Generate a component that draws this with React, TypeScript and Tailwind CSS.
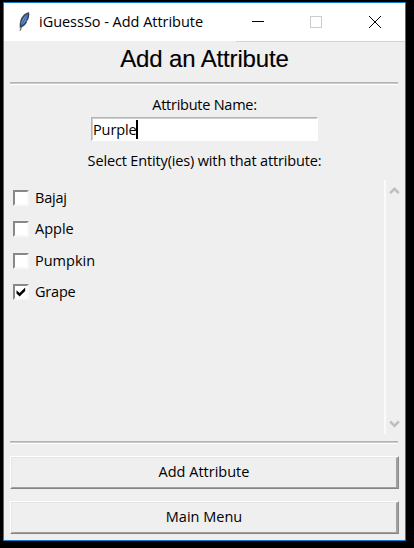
import { useState } from "react";

const UI_FONT = "font-['Open_Sans','Noto_Sans',sans-serif] text-[14.5px] leading-[20px] text-black whitespace-nowrap";

const ENTITIES = ["Bajaj", "Apple", "Pumpkin", "Grape"];
const TRACKING = ["tracking-[-0.2px]", "tracking-normal", "tracking-normal", "tracking-[-0.2px]"];

function Feather() {
  return (
    <svg width="14" height="22" viewBox="0 0 14 22" className="shrink-0">
      <path d="M12 1.2 C8 1.8 5 4.8 3.5 9 C2.6 12 2.4 15 3 17 C6.2 16 8.8 13.8 10 11.2 L9.5 10.5 L11 9 C12.3 6 12.6 3.5 12 1.2Z" fill="#3b4452" />
      <path d="M10.8 2.8 C7.8 4.2 5.2 7.5 4 12.2 L4.8 14.6 C7.6 12.8 10.2 9 10.8 2.8Z" fill="#5b94dc" />
      <path d="M10.5 3.3 C8 7.5 5 12 3.6 19" stroke="#2c5387" strokeWidth="0.8" fill="none" />
      <path d="M3.4 16 L3.2 20" stroke="#777" strokeWidth="1" />
    </svg>
  );
}

function TitleBar() {
  return (
    <header className="flex h-[38px] shrink-0 bg-white">
      <div className="flex w-[232px] items-center pl-[13px]">
        <Feather />
        <span className={`${UI_FONT} ml-[8px] tracking-[-0.03px]`}>iGuessSo - Add Attribute</span>
      </div>
      <svg width="169" height="38" viewBox="0 0 169 38" shapeRendering="crispEdges">
        <path d="M16 18.5H28" stroke="#000" />
        <rect x="74.5" y="13.5" width="11" height="11" fill="none" stroke="#cccccc" />
        <path d="M133 13L145 25M145 13L133 25" stroke="#000" />
      </svg>
    </header>
  );
}

function Groove() {
  return (
    <div className="mx-[6px] h-[3px] w-[388px] shrink-0 border-t border-b border-t-[#b4b4b4] border-b-white bg-[#c8c8c8]" />
  );
}

function Check({ on, onToggle }: { on: boolean; onToggle: () => void }) {
  return (
    <button
      onClick={onToggle}
      className="flex h-[16px] w-[16px] shrink-0 border-2 border-t-[#888888] border-r-[#f8f8f8] border-b-[#f8f8f8] border-l-[#888888] bg-white"
    >
      {on && (
        <svg width="12" height="12" viewBox="0 0 12 12">
          <path d="M1.5 4.2 L4.6 7 L10.2 1.4 V5 L4.6 10.4 L1.5 7.6Z" fill="#000" />
        </svg>
      )}
    </button>
  );
}

function Chevron({ down = false }: { down?: boolean }) {
  return (
    <svg width="11" height="9" viewBox="0 0 11 9">
      <path d={down ? "M1.2 1.5 L5.5 5.8 L9.8 1.5" : "M1.2 7.2 L5.5 2.9 L9.8 7.2"} fill="none" stroke="#bfbfbf" strokeWidth="2.6" />
    </svg>
  );
}

function PushButton({ label }: { label: string }) {
  return (
    <button className="flex h-[33px] w-[389px] shrink-0 border border-t-white border-r-[#8c8c8c] border-b-[#858585] border-l-white">
      <span className="flex h-[31px] w-[387px] items-center justify-center border border-r-2 border-t-[#e4e4e4] border-r-[#a0a0a0] border-b-[#a0a0a0] border-l-[#e4e4e4] pb-px">
        <span className={UI_FONT}>{label}</span>
      </span>
    </button>
  );
}

export default function App() {
  const [checked, setChecked] = useState([false, false, false, true]);
  const toggle = (i: number) => setChecked(checked.map((v, j) => (i === j ? !v : v)));

  return (
    <div className="h-[548px] w-[414px] overflow-hidden bg-black pt-[2px] pl-[3px]">
      <div className="flex h-[539px] w-[403px] flex-col border border-[#1979ca] bg-[#efefef]">
        <TitleBar />
        <div className="ml-[232px] h-px shrink-0 bg-[#d4d4d4]" />
        <h1 className="flex h-[40px] shrink-0 items-center justify-center pb-[6px] font-['Liberation_Sans',Arial,sans-serif] text-[24px] leading-[30px] tracking-[-0.14px] text-black [-webkit-text-stroke:0.15px_black]">
          Add an Attribute
        </h1>
        <Groove />
        <div className="flex h-[32px] shrink-0 items-end justify-center pb-[2px]">
          <span className={`${UI_FONT} tracking-[-0.25px]`}>Attribute Name:</span>
        </div>
        <div className="ml-[87px] flex h-[24px] w-[227px] shrink-0 border border-t-[#b4b4b4] border-r-white border-b-white border-l-[#b4b4b4] bg-white">
          <div className="flex w-[225px] items-center border-t border-l border-[#d0d0d0]">
            <span className={`${UI_FONT} tracking-[-0.1px]`}>Purple</span>
            <span className="-ml-px h-[19px] w-[2px] bg-black" />
          </div>
        </div>
        <div className="flex h-[39px] shrink-0 items-center justify-center">
          <span className={`${UI_FONT} tracking-[-0.15px]`}>Select Entity(ies) with that attribute:</span>
        </div>
        <div className="flex h-[254px] shrink-0">
          <div className="flex w-[380px] flex-col pt-[2.4px] pl-[9px]">
            {ENTITIES.map((name, i) => (
              <div key={name} className="flex h-[31.3px] items-center">
                <Check on={checked[i]} onToggle={() => toggle(i)} />
                <span className={`${UI_FONT} ml-[6px] ${TRACKING[i]}`}>{name}</span>
              </div>
            ))}
          </div>
          <div className="flex w-[21px] flex-col items-end justify-between border-l-2 border-[#fafafa] pt-[6px] pr-[5px] pb-[5px]">
            <Chevron />
            <Chevron down />
          </div>
        </div>
        <div className="h-[7px] shrink-0" />
        <Groove />
        <div className="flex flex-col gap-[12px] pt-[12px] pl-[6px]">
          <PushButton label="Add Attribute" />
          <PushButton label="Main Menu" />
        </div>
      </div>
    </div>
  );
}
